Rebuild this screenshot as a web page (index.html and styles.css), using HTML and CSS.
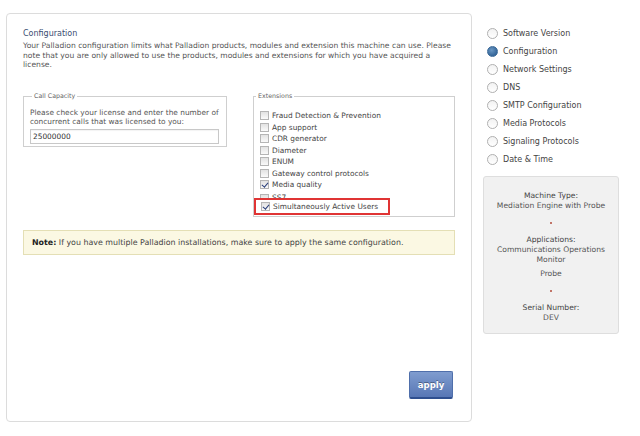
FILE: index.html
```html
<!DOCTYPE html>
<html>
<head>
<meta charset="utf-8">
<link rel="stylesheet" href="styles.css">
</head>
<body>
<div class="page">
  <div class="main">
    <h1 class="title">Configuration</h1>
    <p class="intro">Your Palladion configuration limits what Palladion products, modules and extension this machine can use. Please note that you are only allowed to use the products, modules and extensions for which you have acquired a license.</p>
    <div class="sets">
      <fieldset class="fs fs-cap">
        <legend>Call Capacity</legend>
        <p class="cap-text">Please check your license and enter the number of concurrent calls that was licensed to you:</p>
        <input class="cap-input" type="text" value="25000000">
      </fieldset>
      <fieldset class="fs fs-ext">
        <legend>Extensions</legend>
        <ul class="ext">
          <li><span class="cb"></span>Fraud Detection &amp; Prevention</li>
          <li><span class="cb"></span>App support</li>
          <li><span class="cb"></span>CDR generator</li>
          <li><span class="cb"></span>Diameter</li>
          <li><span class="cb"></span>ENUM</li>
          <li><span class="cb"></span>Gateway control protocols</li>
          <li><span class="cb on"></span>Media quality</li>
          <li class="clip"><span class="cb"></span>SS7</li>
          <li class="hl"><span class="cb on"></span>Simultaneously Active Users</li>
        </ul>
      </fieldset>
    </div>
    <div class="note"><b>Note:</b> If you have multiple Palladion installations, make sure to apply the same configuration.</div>
    <div class="actions"><button class="apply">apply</button></div>
  </div>
  <div class="side">
    <ul class="steps">
      <li><span class="rd"></span>Software Version</li>
      <li><span class="rd on"></span>Configuration</li>
      <li><span class="rd"></span>Network Settings</li>
      <li><span class="rd"></span>DNS</li>
      <li><span class="rd"></span>SMTP Configuration</li>
      <li><span class="rd"></span>Media Protocols</li>
      <li><span class="rd"></span>Signaling Protocols</li>
      <li><span class="rd"></span>Date &amp; Time</li>
    </ul>
    <div class="info">
      <div class="lbl">Machine Type:</div>
      <div class="val">Mediation Engine with Probe</div>
      <div class="dot"><span></span></div>
      <div class="lbl">Applications:</div>
      <div class="val">Communications Operations Monitor</div>
      <div class="val gap">Probe</div>
      <div class="dot dot2"><span></span></div>
      <div class="lbl">Serial Number:</div>
      <div class="val">DEV</div>
    </div>
  </div>
</div>
</body>
</html>
```
FILE: styles.css
```css
* { box-sizing: border-box; }
html, body { margin: 0; padding: 0; background: #fff; }
body {
  font-family: "DejaVu Sans", Verdana, sans-serif;
  font-size: 7.4px;
  color: #444;
  width: 640px;
  height: 436px;
  overflow: hidden;
}
.page {
  display: flex;
  align-items: flex-start;
  padding: 13px 0 0 6px;
}
.main {
  width: 466px;
  height: 409px;
  border: 1px solid #dcdcdc;
  border-radius: 4px;
  padding: 13px 16px 0 16px;
  display: flex;
  flex-direction: column;
}
.title {
  margin: 0;
  font-size: 8px;
  font-weight: normal;
  color: #3b4d72;
  line-height: 13px;
}
.intro {
  margin: 1px 0 0;
  font-size: 7.6px;
  line-height: 9.7px;
  color: #555;
  width: 432px;
}
.sets {
  display: flex;
  justify-content: space-between;
  margin-top: 22px;
  align-items: flex-start;
}
.fs {
  margin: 0;
  border: 1px solid #cfcfcf;
  padding: 0;
}
.fs legend {
  font-size: 6.3px;
  color: #666;
  padding: 0 2px;
  margin-left: 2px;
  line-height: 8px;
}
.fs-cap {
  width: 204px;
  height: 55px;
  padding: 8px 7px 0 6px;
}
.cap-text {
  margin: 0;
  line-height: 9px;
  color: #555;
}
.cap-input {
  display: block;
  margin-top: 3px;
  width: 189px;
  height: 15px;
  border: 1px solid #c8c8c8;
  box-shadow: inset 0 1px 1px rgba(0,0,0,0.05);
  font: 7.4px "DejaVu Sans", Verdana, sans-serif;
  color: #333;
  padding: 0 2px;
}
.fs-ext {
  width: 202px;
  height: 125px;
  padding: 10px 0 0 0;
}
.ext {
  list-style: none;
  margin: 0;
  padding: 0;
}
.ext li {
  display: flex;
  align-items: center;
  height: 11.5px;
  line-height: 11.5px;
  padding-left: 6px;
  color: #444;
  white-space: nowrap;
}
.ext li.clip {
  height: 7.5px;
  overflow: hidden;
  align-items: flex-start;
  line-height: 14px;
}
.ext li.clip .cb { margin-top: 3px; }
.ext li.hl {
  width: 136px;
  height: 17px;
  margin-left: 0;
  padding-left: 5px;
  border: 2px solid #e03434;
}
.cb {
  position: relative;
  display: inline-block;
  width: 9px;
  height: 9px;
  border: 1px solid #b5b5b5;
  background: linear-gradient(#e2e2e2, #fafafa);
  margin-right: 3px;
  flex: none;
}
.cb.on::after {
  content: "";
  position: absolute;
  left: 2px;
  top: 0;
  width: 2.5px;
  height: 5px;
  border: solid #2a3f7a;
  border-width: 0 1.3px 1.3px 0;
  transform: rotate(40deg);
}
.note {
  margin-top: 13px;
  height: 25px;
  background: #fbf8e3;
  border: 1px solid #e4dfb5;
  padding: 0 8px;
  line-height: 23px;
  color: #444;
  font-size: 7.9px;
}
.note b { color: #222; }
.actions {
  display: flex;
  justify-content: flex-end;
  padding-right: 2px;
  margin-top: 116px;
}
.apply {
  width: 44px;
  height: 28px;
  border: 1px solid #4f6fab;
  border-bottom: 2px solid #2f4f8f;
  border-radius: 2px;
  background: linear-gradient(#7f9ccf, #5877b5);
  color: #fff;
  font: bold 8.5px "DejaVu Sans", Verdana, sans-serif;
  text-shadow: 0 -1px 0 rgba(0,0,0,0.35);
  padding: 0;
}
.side {
  margin-left: 11px;
  width: 136px;
  padding-top: 11px;
  font-size: 8px;
}
.steps {
  list-style: none;
  margin: 0;
  padding: 0;
}
.steps li {
  display: flex;
  align-items: center;
  height: 18px;
  color: #444;
  padding-left: 4px;
}
.rd {
  display: inline-block;
  width: 11px;
  height: 11px;
  border-radius: 50%;
  border: 1px solid #b0b0b0;
  background: linear-gradient(#f2f2f2, #fff);
  margin-right: 5px;
  flex: none;
}
.rd.on {
  border-color: #3c6a98;
  background: radial-gradient(circle at 40% 35%, #6a97c3, #36679a 70%);
}
.info {
  margin-top: 8px;
  height: 158px;
  background: #f1f1f1;
  border: 1px solid #dedede;
  border-radius: 3px;
  text-align: center;
  padding-top: 14px;
  line-height: 10px;
  font-size: 7.6px;
}
.info .lbl { color: #444; }
.info .val { color: #555; }
.info .gap { margin-top: 4px; }
.info .dot {
  height: 10px;
  margin: 7px 0;
  display: flex;
  justify-content: center;
  align-items: center;
}
.info .dot span {
  width: 2px;
  height: 2px;
  border-radius: 50%;
  background: #b04a3a;
}
```
